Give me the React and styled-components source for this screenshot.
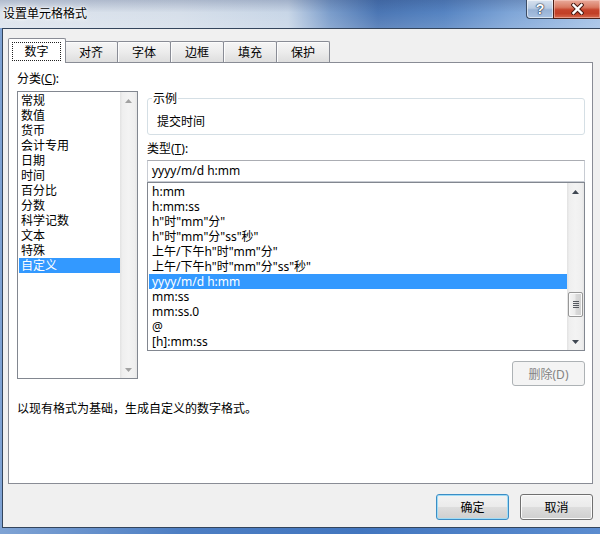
import React from 'react';
import styled, { createGlobalStyle } from 'styled-components';

const GlobalStyle = createGlobalStyle`
  html, body { margin: 0; padding: 0; }
  body {
    width: 600px; height: 534px; overflow: hidden;
    font-family: "Noto Sans", "Noto Sans CJK SC", sans-serif;
    font-size: 12px; color: #000;
  }
  * { box-sizing: border-box; }
`;

const Window = styled.div`
  width: 600px; height: 534px;
  display: flex; flex-direction: column;
  background: linear-gradient(90deg, #7fa3d4 0%, #4d7ec3 30%, #4276bf 60%, #5b8ccf 100%);
`;

const TitleBar = styled.div`
  height: 28px; flex: none;
  display: flex; align-items: flex-start;
  background:
    linear-gradient(180deg, rgba(25,45,95,0.22) 0%, rgba(255,255,255,0) 45%, rgba(255,255,255,0.12) 100%),
    linear-gradient(90deg, #dde4ed 0%, #d6dfea 30%, #c8d6e7 48%, #7b9dcb 55%, #4b76b4 63%, #5684c2 74%, #7ea5d7 85%, #a6c3e7 100%);
`;

const TitleText = styled.div`
  padding-left: 3px;
  line-height: 28px;
  font-size: 12px;
  color: #000;
  text-shadow: 0 0 6px #fff, 0 0 3px #fff, 0 0 2px #fff;
`;

const Caption = styled.div`
  margin-left: auto; display: flex;
`;

const HelpButton = styled.div`
  width: 27px; height: 19px;
  border: 1px solid #3c4c63; border-top: none; border-right: none;
  border-radius: 0 0 0 4px;
  background: linear-gradient(180deg, #d8e2ef 0%, #b9cbe2 45%, #97b1d4 55%, #a9c2e2 100%);
  box-shadow: inset 0 0 0 1px rgba(255,255,255,0.55);
  display: flex; align-items: center; justify-content: center;
  font-family: "Liberation Sans", sans-serif; font-weight: bold; font-size: 14px;
  color: #fff;
  text-shadow: 0 0 1px #24344e, 0 0 1px #24344e, 0 0 2px #24344e;
`;

const CloseButton = styled.div`
  width: 47px; height: 19px;
  border: 1px solid #4b1f17; border-top: none; border-right: none;
  background: linear-gradient(180deg, #e9ab9c 0%, #d97a62 40%, #c5432b 55%, #c23f26 75%, #d66a4f 100%);
  box-shadow: inset 0 0 0 1px rgba(255,220,210,0.45);
  display: flex; align-items: center; justify-content: center;
`;

const Body = styled.div`
  flex: 1;
  margin: 0 0 6px 2px;
  border: 1px solid #34455c; border-right: none;
  background: #f0f0f0;
  display: flex; flex-direction: column;
  min-height: 0;
`;

const TabStrip = styled.div`
  display: flex; align-items: flex-end;
  padding: 9px 0 0 7px;
  margin-bottom: -1px;
  position: relative; z-index: 1;
`;

const Tab = styled.div`
  width: ${p => (p.$active ? 58 : 54)}px;
  height: ${p => (p.$active ? 25 : 21)}px;
  margin: 0 ${p => (p.$active ? -1 : 0)}px ${p => (p.$active ? 0 : 1)}px ${p => (p.$active ? -2 : -1)}px;
  border: 1px solid #898c95; border-bottom: none;
  border-radius: 2px 2px 0 0;
  background: ${p => (p.$active ? '#fff' : 'linear-gradient(180deg, #f6f6f6 0%, #ececec 50%, #dedede 100%)')};
  box-shadow: ${p => (p.$active ? 'none' : 'inset 1px 1px 0 #fcfcfc')};
  position: relative; z-index: ${p => (p.$active ? 2 : 1)};
  display: flex; align-items: stretch; justify-content: center;
  padding: ${p => (p.$active ? '3px 4px 2px 3px' : '0')};
  line-height: 19px;
`;

const TabLabel = styled.span`
  flex: 1;
  display: flex; align-items: center; justify-content: center;
  border: 1px ${p => (p.$focus ? 'dotted #222' : 'solid transparent')};
`;

const Panel = styled.div`
  flex: 1;
  margin: 0 7px 0 5px;
  border: 1px solid #898c95;
  background: #fff;
  padding: 8px 7px 0 8px;
  display: flex; flex-direction: column;
`;

const Columns = styled.div`
  display: flex; gap: 9px; align-items: flex-start;
`;

const LeftCol = styled.div`
  width: 121px; flex: none;
  display: flex; flex-direction: column;
`;

const RightCol = styled.div`
  flex: 1;
  display: flex; flex-direction: column;
`;

const FieldLabel = styled.div`
  line-height: 15px; height: 15px;
  margin-top: ${p => p.$mt || 0}px;
  white-space: nowrap;
`;

const ListBox = styled.div`
  height: ${p => p.$h}px;
  margin-top: ${p => p.$mt || 0}px;
  border: 1px solid #828790;
  background: #fff;
  display: flex;
`;

const ListItems = styled.div`
  flex: 1; min-width: 0;
  padding: 1px 0 1px 1px;
  overflow: hidden;
`;

const ListItem = styled.div`
  height: 15px; line-height: 15px;
  padding-left: ${p => p.$pl}px;
  white-space: nowrap;
  background: ${p => (p.$selected ? '#3399ff' : 'transparent')};
  color: ${p => (p.$selected ? '#fff' : '#000')};
`;

const ScrollBar = styled.div`
  width: 17px; flex: none;
  display: flex; flex-direction: column;
  background: linear-gradient(90deg, #e2e2e2 0%, #efefef 15%, #f3f3f3 50%, #efefef 85%, #e6e6e6 100%);
`;

const ScrollArrow = styled.div`
  height: 17px; flex: none;
  display: flex; align-items: center; justify-content: center;
`;

const ScrollTrack = styled.div`
  flex: 1; display: flex; flex-direction: column;
`;

const Thumb = styled.div`
  margin: ${p => p.$offset}px 1px 0 1px;
  height: 25px;
  border: 1px solid #979797;
  border-radius: 2px;
  background: linear-gradient(90deg, #f5f5f5 0%, #ebebeb 45%, #d9d9d9 55%, #cfcfcf 100%);
  box-shadow: inset 0 0 0 1px #fbfbfb;
  display: flex; align-items: center; justify-content: center;
`;

const SampleGroup = styled.fieldset`
  margin: 20px 0 0 0;
  padding: 8px 0 5px 9px;
  border: 1px solid #d5dfe5;
  border-radius: 3px;
  min-width: 0;
`;

const SampleLegend = styled.legend`
  margin-left: -5px;
  padding: 0 1px;
  line-height: 15px;
  color: #000;
`;

const SampleText = styled.div`
  line-height: 15px;
`;

const TextInput = styled.div`
  margin-top: 4px;
  height: 22px;
  border: 1px solid #abadb3;
  border-left-color: #c8ccd3; border-right-color: #c8ccd3; border-bottom-color: #c8ccd3;
  background: #fff;
  padding-left: 4px;
  line-height: 20px;
  white-space: nowrap;
`;

const DisabledButton = styled.div`
  align-self: flex-end;
  margin-top: 10px;
  width: 73px; height: 25px;
  border: 1px solid #adb2b5; border-radius: 3px;
  background: #f4f4f4;
  color: #838383;
  display: flex; align-items: center; justify-content: center;
`;

const Description = styled.div`
  margin-top: 15px;
  line-height: 15px;
`;

const ButtonRow = styled.div`
  display: flex; justify-content: flex-end; gap: 11px;
  padding: 10px 7px 7px 0;
`;

const DialogButton = styled.div`
  width: 73px; height: 26px;
  border: 1px solid ${p => (p.$focused ? '#3c8dc5' : '#707070')};
  border-radius: 3px;
  background: linear-gradient(180deg, #f3f3f3 0%, #ebebeb 48%, #dddddd 52%, #cfcfcf 100%);
  box-shadow: inset 0 0 0 1px ${p => (p.$focused ? '#9fdcf6' : '#fbfbfb')};
  display: flex; align-items: center; justify-content: center;
`;

const Triangle = ({ up, color }) => (
  <svg width="7" height="4" viewBox="0 0 7 4">
    <polygon points={up ? '0,4 3.5,0 7,4' : '0,0 7,0 3.5,4'} fill={color} />
  </svg>
);

const Grip = () => (
  <svg width="6" height="7" viewBox="0 0 6 7">
    {[0, 2, 4, 6].map(y => (
      <rect key={y} x="0" y={y} width="6" height="1" fill="#55595f" />
    ))}
  </svg>
);

const CloseGlyph = () => (
  <svg width="13" height="12" viewBox="0 0 13 12">
    <path d="M2.5 2 L10.5 10 M10.5 2 L2.5 10" stroke="#4a1a12" strokeWidth="4.4" strokeLinecap="square" fill="none" />
    <path d="M2.5 2 L10.5 10 M10.5 2 L2.5 10" stroke="#ffffff" strokeWidth="2.4" strokeLinecap="square" fill="none" />
  </svg>
);

const tabs = ['数字', '对齐', '字体', '边框', '填充', '保护'];
const categories = ['常规', '数值', '货币', '会计专用', '日期', '时间', '百分比', '分数', '科学记数', '文本', '特殊', '自定义'];
const formats = [
  'h:mm',
  'h:mm:ss',
  'h"时"mm"分"',
  'h"时"mm"分"ss"秒"',
  '上午/下午h"时"mm"分"',
  '上午/下午h"时"mm"分"ss"秒"',
  'yyyy/m/d h:mm',
  'mm:ss',
  'mm:ss.0',
  '@',
  '[h]:mm:ss',
];

export default function App() {
  return (
    <>
      <GlobalStyle />
      <Window>
        <TitleBar>
          <TitleText>设置单元格格式</TitleText>
          <Caption>
            <HelpButton>?</HelpButton>
            <CloseButton><CloseGlyph /></CloseButton>
          </Caption>
        </TitleBar>
        <Body>
          <TabStrip>
            {tabs.map((t, i) => (
              <Tab key={t} $active={i === 0}>
                <TabLabel $focus={i === 0}>{t}</TabLabel>
              </Tab>
            ))}
          </TabStrip>
          <Panel>
            <Columns>
              <LeftCol>
                <FieldLabel>分类(<u>C</u>):</FieldLabel>
                <ListBox $h={288} $mt={5}>
                  <ListItems>
                    {categories.map(c => (
                      <ListItem key={c} $pl={2} $selected={c === '自定义'}>{c}</ListItem>
                    ))}
                  </ListItems>
                  <ScrollBar>
                    <ScrollArrow><Triangle up color="#a2a2a2" /></ScrollArrow>
                    <ScrollTrack />
                    <ScrollArrow><Triangle color="#a2a2a2" /></ScrollArrow>
                  </ScrollBar>
                </ListBox>
              </LeftCol>
              <RightCol>
                <SampleGroup>
                  <SampleLegend>示例</SampleLegend>
                  <SampleText>提交时间</SampleText>
                </SampleGroup>
                <FieldLabel $mt={6}>类型(<u>T</u>):</FieldLabel>
                <TextInput>yyyy/m/d h:mm</TextInput>
                <ListBox $h={169}>
                  <ListItems>
                    {formats.map(f => (
                      <ListItem key={f} $pl={3} $selected={f === 'yyyy/m/d h:mm'}>{f}</ListItem>
                    ))}
                  </ListItems>
                  <ScrollBar>
                    <ScrollArrow><Triangle up color="#3f4752" /></ScrollArrow>
                    <ScrollTrack>
                      <Thumb $offset={92}><Grip /></Thumb>
                    </ScrollTrack>
                    <ScrollArrow><Triangle color="#3f4752" /></ScrollArrow>
                  </ScrollBar>
                </ListBox>
                <DisabledButton>删除(D)</DisabledButton>
              </RightCol>
            </Columns>
            <Description>以现有格式为基础，生成自定义的数字格式。</Description>
          </Panel>
          <ButtonRow>
            <DialogButton $focused>确定</DialogButton>
            <DialogButton>取消</DialogButton>
          </ButtonRow>
        </Body>
      </Window>
    </>
  );
}
